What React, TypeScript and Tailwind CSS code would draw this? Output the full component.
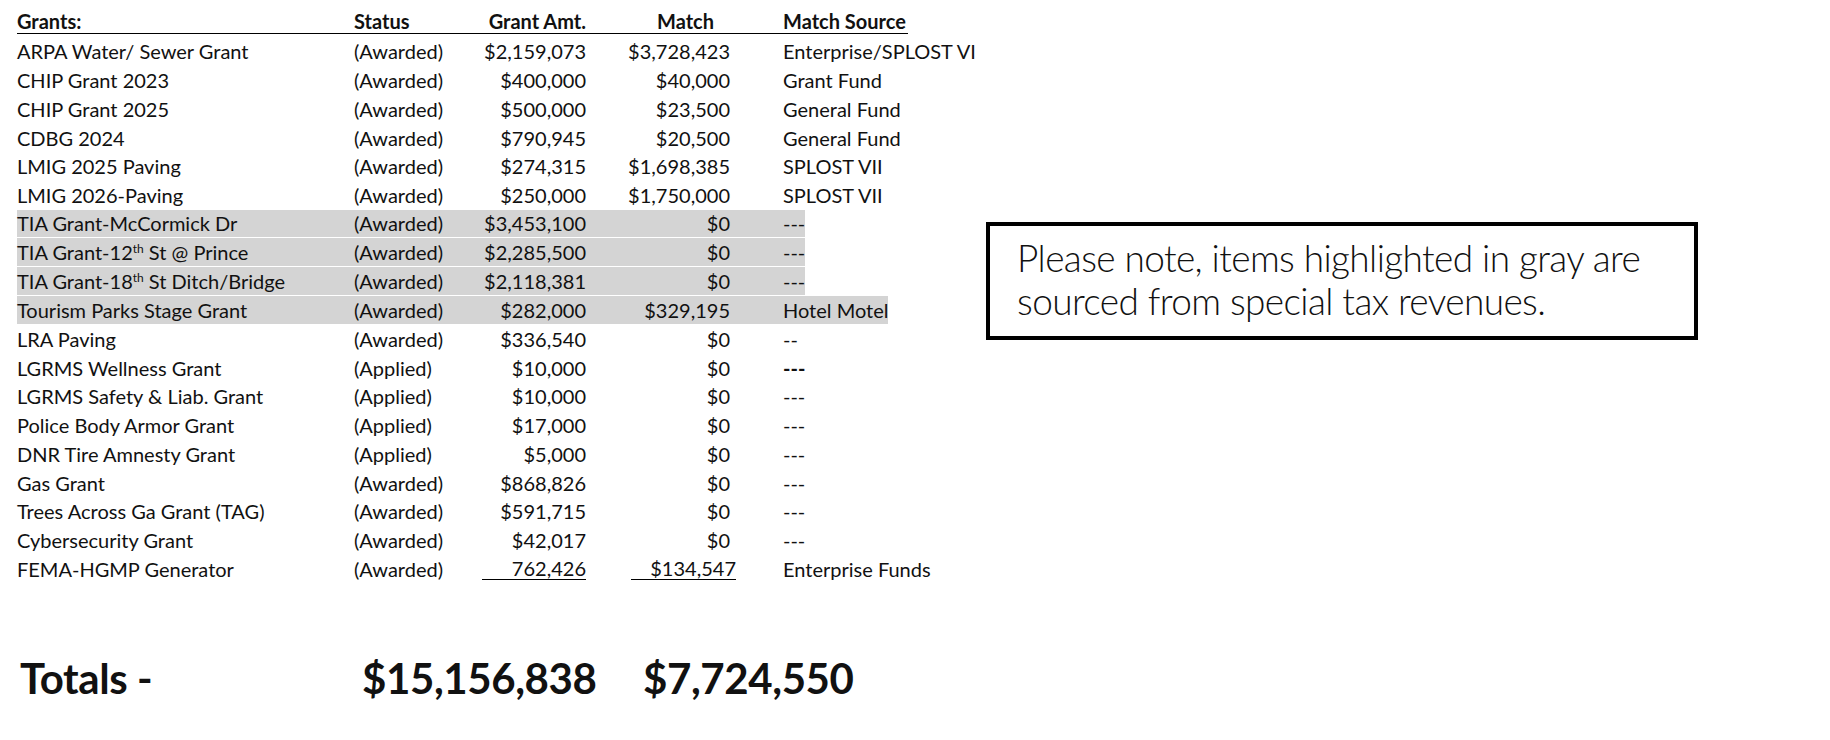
import React from 'react';

type Row = {
  name: React.ReactNode;
  status: string;
  amt: string;
  match: string;
  src: string;
  gray?: boolean;
  boldSrc?: boolean;
  underline?: boolean;
};

const Th = () => <sup className="text-[12px] -top-[7px]">th</sup>;

const rows: Row[] = [
  { name: 'ARPA Water/ Sewer Grant', status: '(Awarded)', amt: '$2,159,073', match: '$3,728,423', src: 'Enterprise/SPLOST VI' },
  { name: 'CHIP Grant 2023', status: '(Awarded)', amt: '$400,000', match: '$40,000', src: 'Grant Fund' },
  { name: 'CHIP Grant 2025', status: '(Awarded)', amt: '$500,000', match: '$23,500', src: 'General Fund' },
  { name: 'CDBG 2024', status: '(Awarded)', amt: '$790,945', match: '$20,500', src: 'General Fund' },
  { name: 'LMIG 2025 Paving', status: '(Awarded)', amt: '$274,315', match: '$1,698,385', src: 'SPLOST VII' },
  { name: 'LMIG 2026-Paving', status: '(Awarded)', amt: '$250,000', match: '$1,750,000', src: 'SPLOST VII' },
  { name: 'TIA Grant-McCormick Dr', status: '(Awarded)', amt: '$3,453,100', match: '$0', src: '---', gray: true },
  { name: <>TIA Grant-12<Th /> St @ Prince</>, status: '(Awarded)', amt: '$2,285,500', match: '$0', src: '---', gray: true },
  { name: <>TIA Grant-18<Th /> St Ditch/Bridge</>, status: '(Awarded)', amt: '$2,118,381', match: '$0', src: '---', gray: true },
  { name: 'Tourism Parks Stage Grant', status: '(Awarded)', amt: '$282,000', match: '$329,195', src: 'Hotel Motel', gray: true },
  { name: 'LRA Paving', status: '(Awarded)', amt: '$336,540', match: '$0', src: '--' },
  { name: 'LGRMS Wellness Grant', status: '(Applied)', amt: '$10,000', match: '$0', src: '---', boldSrc: true },
  { name: 'LGRMS Safety & Liab. Grant', status: '(Applied)', amt: '$10,000', match: '$0', src: '---' },
  { name: 'Police Body Armor Grant', status: '(Applied)', amt: '$17,000', match: '$0', src: '---' },
  { name: 'DNR Tire Amnesty Grant', status: '(Applied)', amt: '$5,000', match: '$0', src: '---' },
  { name: 'Gas Grant', status: '(Awarded)', amt: '$868,826', match: '$0', src: '---' },
  { name: 'Trees Across Ga Grant (TAG)', status: '(Awarded)', amt: '$591,715', match: '$0', src: '---' },
  { name: 'Cybersecurity Grant', status: '(Awarded)', amt: '$42,017', match: '$0', src: '---' },
  { name: 'FEMA-HGMP Generator', status: '(Awarded)', amt: '762,426', match: '$134,547', src: 'Enterprise Funds', underline: true },
];

const GrantRow = ({ r }: { r: Row }) => (
  <div className="h-[28.75px] flex items-stretch">
    <div className={`inline-flex items-center h-full ${r.gray ? 'bg-[#d4d4d4] border-b border-white' : ''}`}>
      <div className="w-[337px] whitespace-nowrap">{r.name}</div>
      <div className="w-[120px] whitespace-nowrap">{r.status}</div>
      <div className="w-[112px] flex justify-end whitespace-nowrap">
        {r.underline ? (
          <span className="inline-block w-[104px] text-right border-b-[1.5px] border-black leading-[22px]">{r.amt}</span>
        ) : (
          r.amt
        )}
      </div>
      <div className="w-[144px] flex justify-end whitespace-nowrap">
        {r.underline ? (
          <span className="inline-block w-[105px] text-right border-b-[1.5px] border-black leading-[22px] -mr-[6px]">{r.match}</span>
        ) : (
          r.match
        )}
      </div>
      <div className={`pl-[53px] whitespace-nowrap ${r.boldSrc ? 'font-bold' : ''}`}>{r.src}</div>
    </div>
  </div>
);

export default function App() {
  return (
    <div className="w-[1830px] h-[740px] bg-white text-[#111] overflow-hidden flex">
      <div className="w-[986px] pl-[17px] font-['Lato','Open_Sans',sans-serif] text-[20px]">
        <div className="w-[891px] h-[34px] border-b-[1.5px] border-black flex items-end font-bold leading-[24px]">
          <div className="w-[337px]">Grants:</div>
          <div className="w-[120px]">Status</div>
          <div className="w-[112px] text-right">Grant Amt.</div>
          <div className="w-[144px] flex justify-end pr-[16px]">Match</div>
          <div className="pl-[53px]">Match Source</div>
        </div>
        <div className="mt-[3px]">
          {rows.map((r, i) => (
            <GrantRow key={i} r={r} />
          ))}
        </div>
        <div className="mt-[72px] flex items-center h-[46px] font-['Lato',sans-serif] font-bold text-[42px] tracking-[-0.4px]">
          <div className="w-[345px] pl-[3px]">Totals -</div>
          <div className="w-[281px]">$15,156,838</div>
          <div>$7,724,550</div>
        </div>
      </div>
      <div className="pt-[222px]">
        <div className="w-[712px] h-[118px] border-4 border-black pl-[27px] pt-[10px] font-['Lato',sans-serif] font-light text-[37px] leading-[43px] tracking-[-0.6px]">
          <div>Please note, items highlighted in gray are</div>
          <div>sourced from special tax revenues.</div>
        </div>
      </div>
    </div>
  );
}
